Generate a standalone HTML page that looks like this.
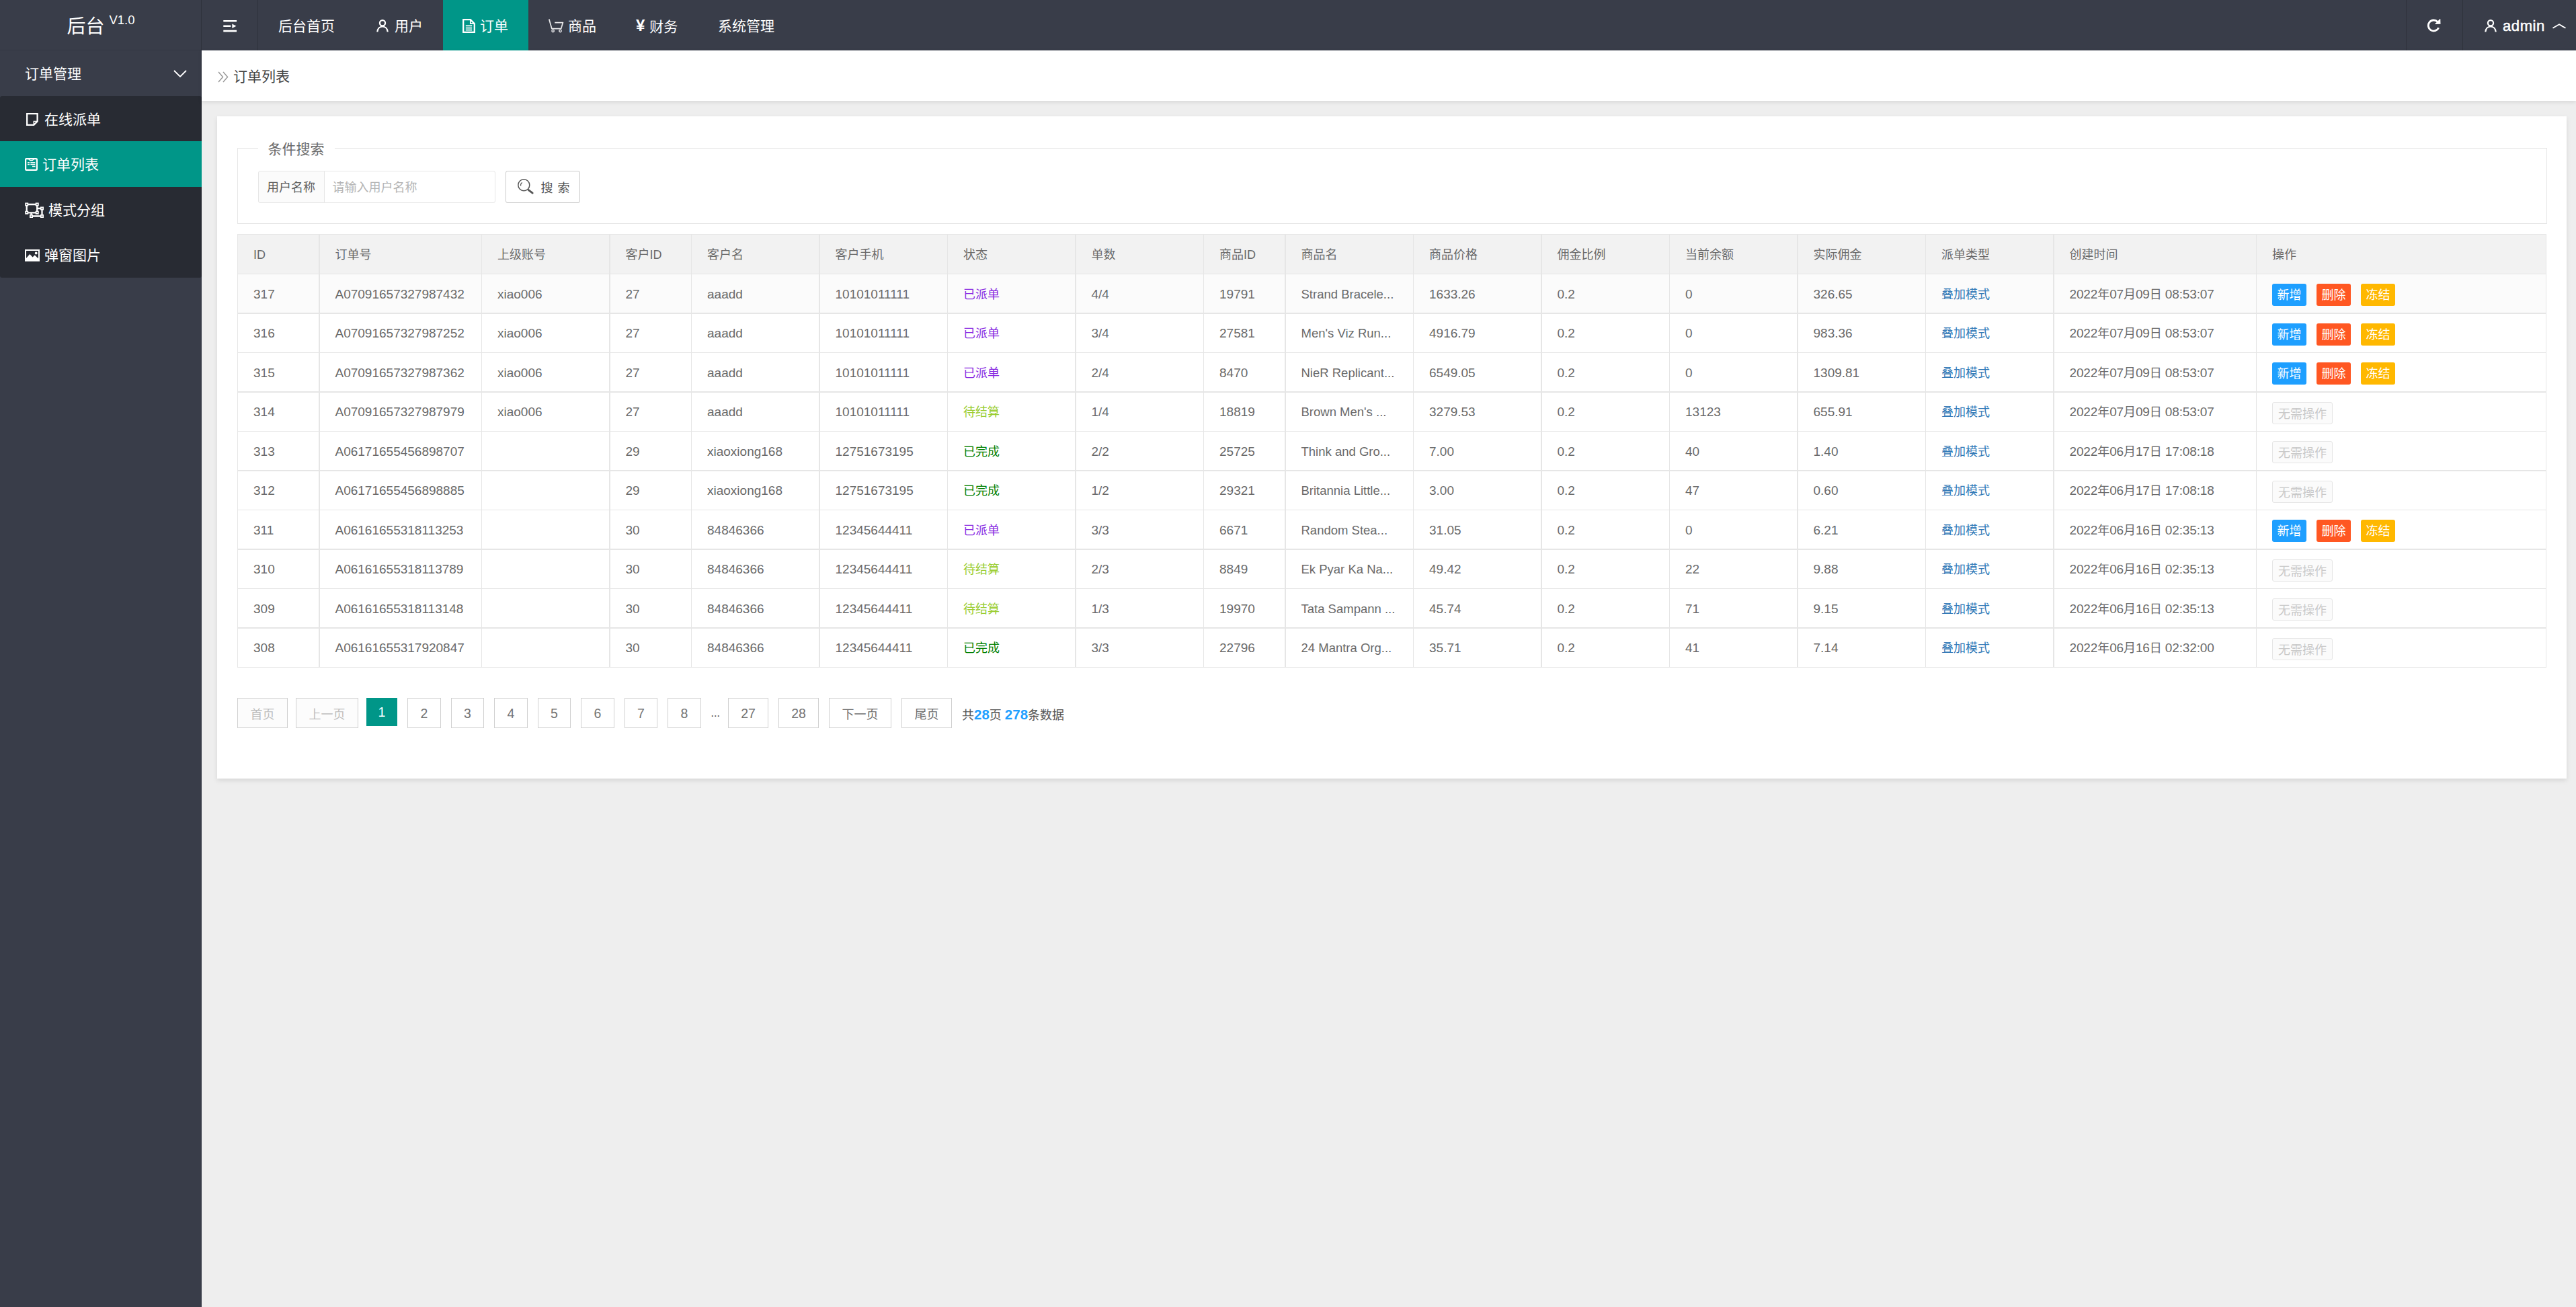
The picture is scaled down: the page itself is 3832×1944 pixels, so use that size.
<!DOCTYPE html>
<html lang="zh-CN">
<head>
<meta charset="utf-8">
<title>后台 V1.0 - 订单列表</title>
<style>
*{box-sizing:border-box;margin:0;padding:0}
html,body{width:3832px;height:1944px;overflow:hidden}
body{background:#eeeeee;font-family:"Liberation Sans","Noto Sans CJK SC",sans-serif;color:#666;font-size:21px;position:relative}
a{text-decoration:none;color:inherit}
svg{display:block}
.abs{position:absolute}
/* header */
#hd{position:absolute;left:0;top:0;width:3832px;height:75px;background:#393D49;color:#fff}
#logo{position:absolute;left:0;top:0;width:300px;height:75px;text-align:center;line-height:79px;font-size:28px;white-space:nowrap;border-bottom:1px solid #343843}
#logo sup{font-size:18.500px;position:relative;top:-2.500px;margin-left:7px;vertical-align:super;line-height:0}
.vline{position:absolute;top:0;width:1px;height:75px;background:#2f323c}
.nav{position:absolute;top:0;height:75px;line-height:78px;font-size:21px;color:#fff;white-space:nowrap}
.nav.on{background:#009688}
.nav svg{position:absolute}
/* sidebar */
#sd{position:absolute;left:0;top:75px;width:300px;height:1869px;background:#393D49;color:#fff}
#sd .grp{position:absolute;left:0;top:0;width:300px;height:68px;line-height:69px;padding-left:37px;font-size:21px}
#sd .sub{position:absolute;left:0;top:68px;width:300px;height:270px;background:#282B33;border-radius:3px}
#sd .it{position:absolute;left:0;width:300px;height:68px;line-height:69px;font-size:21px;white-space:nowrap}
#sd .it.on{background:#009688}
#sd .it span{position:absolute;top:0}
#sd .it svg{position:absolute}
/* breadcrumb */
#bc{position:absolute;left:300px;top:75px;width:3532px;height:75px;background:#fff;box-shadow:0 2px 6px rgba(0,0,0,.10);line-height:78px;font-size:21px;color:#444}
#bc span{position:absolute;left:47px;top:0}
/* card */
#card{position:absolute;left:323px;top:173px;width:3495px;height:985px;background:#fff;box-shadow:0 3px 7px rgba(0,0,0,.10)}
#fs{position:absolute;left:30px;top:47px;width:3436px;height:113px;border:1px solid #e6e6e6}
#fs .lg{position:absolute;left:30px;top:-17px;height:34px;line-height:35.500px;padding:0 15px 0 14.5px;background:#fff;font-size:21px;color:#6a6a6a;white-space:nowrap}
.lab{position:absolute;left:30px;top:33px;width:99px;height:48px;border:1px solid #e6e6e6;border-radius:3px 0 0 3px;background:#FBFBFB;font-size:18px;line-height:48px;text-align:center;color:#606060;white-space:nowrap;text-indent:-1px}
.inp{position:absolute;left:128px;top:33px;width:255px;height:48px;border:1px solid #e6e6e6;border-radius:0 3px 3px 0;background:#fff;font-size:18px;line-height:49.5px;padding-left:11.5px;color:#b4b4b4;white-space:nowrap}
.sbtn{position:absolute;left:398px;top:33px;width:111px;height:48px;border:1px solid #C9C9C9;border-radius:3px;background:#fff;font-size:18px;line-height:50px;color:#555;white-space:nowrap}
.sbtn span{position:absolute;left:51.5px;top:0;word-spacing:2px}
.sbtn svg{position:absolute;left:15px;top:9px}
/* table */
#tb{position:absolute;left:30px;top:175px;width:3435px;border-collapse:separate;border-spacing:0;table-layout:fixed;font-size:18px;color:#6a6a6a;border-right:1px solid #e6e6e6;border-bottom:1px solid #e6e6e6}
#tb th,#tb td{border-left:1px solid #e6e6e6;border-top:1px solid #e6e6e6;padding:2px 0 0 23px;text-align:left;font-weight:normal;white-space:nowrap;overflow:hidden;vertical-align:middle;line-height:28px}
#tb .w2{border-left-width:2px;padding-left:22.5px}
#tb tr.h2 td{border-top-width:2px;padding-top:0}
#tb tr{height:58px}
#tb tr.h59{height:59px}
#tb th{background:#f2f2f2;font-size:18px;padding-top:2px}
#tb tr.hv td{background:#fbfbfb}
#tb td.l{font-size:19px}
#tb td.n{font-size:18.500px}
#tb td.dt{letter-spacing:-.13px}
#tb td .c{font-size:18px}
#tb td.sp{color:#8A2BE2}
#tb td.sw{color:#9acd32}
#tb td.sd{color:#008000}
#tb td.lk{color:#337ab7}
.b{display:inline-block;height:33px;line-height:35px;padding:0 7.5px;font-size:18px;border-radius:3px;color:#fff;margin-right:15px;vertical-align:middle;position:relative;top:1px}
.b1{background:#1E9FFF}.b2{background:#FF5722}.b3{background:#FFB800}
.b0{border:1px solid #e6e6e6;background:#FBFBFB;color:#C9C9C9;line-height:34px;padding:0 8px;top:2px}
.u1{top:2px}.b0.d1{top:1px}
/* pager */
#pg{position:absolute;left:0;top:865px;height:45px;font-size:18px;color:#666}
#pg a,#pg span{position:absolute;top:0;height:45px;line-height:44px;text-align:center;white-space:nowrap}
#pg a{border:1px solid #d0d0d0;background:#fff;color:#737373;font-size:19.5px}
#pg a.c{font-size:18px;line-height:48px;color:#6c6c6c}
#pg a.dis{color:#bdbdbd;background:#fcfcfc}
#pg a.cur{background:#009688;color:#fff;border:none;height:42px;line-height:42px}
#pg span.t{top:3px;color:#555}
#pg b{color:#1E9FFF;font-size:20.5px}
</style>
</head>
<body>
<div id="hd">
  <div id="logo">后台<sup>V1.0</sup></div>
  <div class="vline" style="left:299px"></div>
  <div class="nav" style="left:300px;width:83px">
    <svg style="left:32px;top:30px" width="21" height="18" viewBox="0 0 21 18"><path d="M0.300 0h19.700v2.600H0.300zM0.300 7.500h11v2.600H0.300zM0.300 14.800h19.700v2.600H0.300zM13.300 5.500l6.200 3.300-6.200 3.300z" fill="#fff"/></svg>
  </div>
  <div class="vline" style="left:383px"></div>
  <a class="nav" style="left:384px;width:143px;padding-left:30px">后台首页</a>
  <a class="nav" style="left:527px;width:132px;padding-left:60px">
    <svg style="left:33px;top:29px" width="18" height="19" viewBox="0 0 18 19"><circle cx="9" cy="5.300" r="4.100" fill="none" stroke="#fff" stroke-width="2.200"/><path d="M1.300 18.500c0.300-4.800 3.200-8 7.700-8s7.400 3.200 7.700 8" fill="none" stroke="#fff" stroke-width="2.200"/></svg>用户</a>
  <a class="nav on" style="left:659px;width:127px;padding-left:55px">
    <svg style="left:29px;top:28px" width="19" height="21" viewBox="0 0 19 21"><path d="M1.200 1.200H11.800L17.800 7.200V19.800H1.200z" fill="none" stroke="#fff" stroke-width="2.300" stroke-linejoin="miter"/><path d="M11.800 1.200V7.200H17.800" fill="none" stroke="#fff" stroke-width="1.700"/><path d="M4.800 10.300h9.400M4.800 13.600h9.400M4.800 16.700h9.400" stroke="#fff" stroke-width="1.700" fill="none"/></svg>订单</a>
  <a class="nav" style="left:786px;width:131px;padding-left:59px">
    <svg style="left:29.500px;top:28px" width="23" height="21" viewBox="0 0 23 21"><path d="M0.800 0.600L4.800 14.600H18.700L21.400 5.600H9.200" fill="none" stroke="#fff" stroke-opacity=".88" stroke-width="1.700" stroke-linejoin="round"/><circle cx="6.600" cy="18.100" r="1.700" fill="none" stroke="#fff" stroke-opacity=".9" stroke-width="1.400"/><circle cx="17.500" cy="18.100" r="1.700" fill="none" stroke="#fff" stroke-opacity=".9" stroke-width="1.400"/></svg>商品</a>
  <a class="nav" style="left:917px;width:121px;padding-left:30px"><b style="font-size:24px;position:relative;left:-1px;top:-1px">¥</b> 财务</a>
  <a class="nav" style="left:1038px;width:145px;padding-left:30px">系统管理</a>
  <div class="vline" style="left:3579px"></div>
  <div class="nav" style="left:3580px;width:83px">
    <svg style="left:30px;top:28px" width="22" height="20" viewBox="0 0 22 20"><path d="M17.600 13.300a8 8 0 1 1-1.500-8.800" fill="none" stroke="#fff" stroke-width="2.800"/><path d="M11.800 8l8.700-0.300-0.300-8.200z" fill="#fff"/></svg>
  </div>
  <div class="vline" style="left:3663px"></div>
  <a class="nav" style="left:3664px;width:168px;padding-left:59px">
    <svg style="left:32px;top:29px" width="18" height="19" viewBox="0 0 18 19"><circle cx="9" cy="5.300" r="4.100" fill="none" stroke="#fff" stroke-width="2.200"/><path d="M1.300 18.500c0.300-4.800 3.200-8 7.700-8s7.400 3.200 7.700 8" fill="none" stroke="#fff" stroke-width="2.200"/></svg><span style="font-size:22px;letter-spacing:.6px;-webkit-text-stroke:.5px #fff">admin</span>
    <svg style="left:133px;top:35px" width="20" height="8" viewBox="0 0 20 8"><path d="M0.500 6.800l9.500-5.500 9.500 5.500" fill="none" stroke="#fff" stroke-width="1.900"/></svg>
  </a>
</div>

<div id="sd">
  <div class="grp">订单管理
    <svg class="abs" style="left:258px;top:29px" width="20" height="12" viewBox="0 0 20 12"><path d="M1 1l9 9 9-9" fill="none" stroke="#fff" stroke-width="1.800"/></svg>
  </div>
  <div class="sub">
    <a class="it" style="top:0">
      <svg style="left:39px;top:25px" width="18" height="19" viewBox="0 0 18 19"><path d="M1.200 1.200h15.400v11.300l-5.300 5.300H1.200z" fill="none" stroke="#fff" stroke-width="2.300"/><path d="M16.600 12.500h-5.300v5.300" fill="none" stroke="#fff" stroke-width="1.500"/></svg>
      <span style="left:66px">在线派单</span></a>
    <a class="it on" style="top:67px">
      <svg style="left:37px;top:25px" width="19" height="19" viewBox="0 0 19 19"><rect x="1.100" y="1.100" width="16.800" height="16.800" rx="1.200" fill="none" stroke="#fff" stroke-width="2.200"/><path d="M5.500 1.500l2.300 2.200h3.400l2.300-2.200" fill="none" stroke="#fff" stroke-width="1.300"/><path d="M4 6.800h3M8.300 6.800h7M4 9.600h3M8.300 9.600h7M11 12.400h4.500" fill="none" stroke="#fff" stroke-width="1.500"/></svg>
      <span style="left:63px">订单列表</span></a>
    <a class="it" style="top:135px">
      <svg style="left:37px;top:23px" width="28" height="23" viewBox="0 0 28 23"><path d="M9.500 9h16v11.500H9.500z" fill="none" stroke="#fff" stroke-width="2.300"/><path d="M2.700 3h15.500v12.300H2.700z" fill="#282B33" stroke="#fff" stroke-width="2.300"/><path d="M0.200 0.500h5v5h-5zM15.700 0.500h5v5h-5zM0.200 12.800h5v5h-5zM15.700 12.800h5v5h-5zM7 18h5v5H7zM23 18h5v5h-5zM23 6.500h5v5h-5z" fill="#fff"/><path d="M1.900 2.200h1.600v1.600H1.900zM17.400 2.200H19v1.600h-1.600zM1.900 14.500h1.600v1.600H1.900zM17.400 14.500H19v1.600h-1.600zM8.700 19.700h1.600v1.600H8.700zM24.700 19.700h1.600v1.600h-1.600zM24.700 8.200h1.600v1.600h-1.600z" fill="#282B33"/></svg>
      <span style="left:72px">模式分组</span></a>
    <a class="it" style="top:202px">
      <svg style="left:37px;top:26px" width="22" height="18" viewBox="0 0 22 18"><path d="M0 0h22v17.800H0zM2 2v13.800h18V2z" fill="#fff" fill-rule="evenodd"/><path d="M2 13l5.300-6 4.200 4.600 3.200-3 5.300 5v2.500H2z" fill="#fff"/><circle cx="16.700" cy="5.500" r="1.900" fill="#fff"/></svg>
      <span style="left:66px">弹窗图片</span></a>
  </div>
</div>

<div id="bc">
  <svg class="abs" style="left:24px;top:31px" width="16" height="17" viewBox="0 0 16 17"><path d="M1 1l6.500 7.500-6.500 7.500M8 1l6.500 7.500-6.500 7.500" fill="none" stroke="#999" stroke-width="1.500"/></svg>
  <span>订单列表</span>
</div>

<div id="card">
  <div id="fs">
    <div class="lg">条件搜索</div>
    <div class="lab">用户名称</div>
    <div class="inp">请输入用户名称</div>
    <a class="sbtn"><svg width="28" height="28" viewBox="0 0 28 28"><circle cx="11.300" cy="11.300" r="8.500" fill="none" stroke="#555" stroke-width="1.500"/><path d="M6.600 12.500a4.800 4.800 0 0 1 2.200-5" fill="none" stroke="#555" stroke-width="1.200"/><path d="M18.200 18.600l6 4.600" stroke="#555" stroke-width="2.800" stroke-linecap="round"/></svg><span>搜 索</span></a>
  </div>
  <table id="tb">
    <colgroup><col style="width:121px"><col style="width:242px"><col style="width:190px"><col style="width:122px"><col style="width:190px"><col style="width:191px"><col style="width:190px"><col style="width:191px"><col style="width:121px"><col style="width:191px"><col style="width:190px"><col style="width:191px"><col style="width:190px"><col style="width:191px"><col style="width:190px"><col style="width:302px"><col style="width:431px"></colgroup>
    <thead><tr class="h59"><th>ID</th><th class="w2">订单号</th><th>上级账号</th><th class="w2">客户ID</th><th>客户名</th><th class="w2">客户手机</th><th>状态</th><th class="w2">单数</th><th>商品ID</th><th class="w2">商品名</th><th>商品价格</th><th class="w2">佣金比例</th><th>当前余额</th><th class="w2">实际佣金</th><th>派单类型</th><th class="w2">创建时间</th><th>操作</th></tr></thead>
    <tbody>
<tr class="hv"><td class="l">317</td><td class="l w2">A07091657327987432</td><td class="l">xiao006</td><td class="l w2">27</td><td class="l">aaadd</td><td class="l w2">10101011111</td><td class="sp">已派单</td><td class="l w2">4/4</td><td class="l">19791</td><td class="l n w2">Strand Bracele...</td><td class="l">1633.26</td><td class="l w2">0.2</td><td class="l">0</td><td class="l w2">326.65</td><td class="lk">叠加模式</td><td class="l dt w2">2022<span class="c">年</span>07<span class="c">月</span>09<span class="c">日</span> 08:53:07</td><td class="op"><a class="b b1">新增</a><a class="b b2">删除</a><a class="b b3">冻结</a></td></tr>
<tr class="h2 h59"><td class="l">316</td><td class="l w2">A07091657327987252</td><td class="l">xiao006</td><td class="l w2">27</td><td class="l">aaadd</td><td class="l w2">10101011111</td><td class="sp">已派单</td><td class="l w2">3/4</td><td class="l">27581</td><td class="l n w2">Men's Viz Run...</td><td class="l">4916.79</td><td class="l w2">0.2</td><td class="l">0</td><td class="l w2">983.36</td><td class="lk">叠加模式</td><td class="l dt w2">2022<span class="c">年</span>07<span class="c">月</span>09<span class="c">日</span> 08:53:07</td><td class="op"><a class="b b1 u1">新增</a><a class="b b2 u1">删除</a><a class="b b3 u1">冻结</a></td></tr>
<tr><td class="l">315</td><td class="l w2">A07091657327987362</td><td class="l">xiao006</td><td class="l w2">27</td><td class="l">aaadd</td><td class="l w2">10101011111</td><td class="sp">已派单</td><td class="l w2">2/4</td><td class="l">8470</td><td class="l n w2">NieR Replicant...</td><td class="l">6549.05</td><td class="l w2">0.2</td><td class="l">0</td><td class="l w2">1309.81</td><td class="lk">叠加模式</td><td class="l dt w2">2022<span class="c">年</span>07<span class="c">月</span>09<span class="c">日</span> 08:53:07</td><td class="op"><a class="b b1">新增</a><a class="b b2">删除</a><a class="b b3">冻结</a></td></tr>
<tr class="h2 h59"><td class="l">314</td><td class="l w2">A07091657327987979</td><td class="l">xiao006</td><td class="l w2">27</td><td class="l">aaadd</td><td class="l w2">10101011111</td><td class="sw">待结算</td><td class="l w2">1/4</td><td class="l">18819</td><td class="l n w2">Brown Men's ...</td><td class="l">3279.53</td><td class="l w2">0.2</td><td class="l">13123</td><td class="l w2">655.91</td><td class="lk">叠加模式</td><td class="l dt w2">2022<span class="c">年</span>07<span class="c">月</span>09<span class="c">日</span> 08:53:07</td><td class="op"><a class="b b0">无需操作</a></td></tr>
<tr><td class="l">313</td><td class="l w2">A06171655456898707</td><td class="l"></td><td class="l w2">29</td><td class="l">xiaoxiong168</td><td class="l w2">12751673195</td><td class="sd">已完成</td><td class="l w2">2/2</td><td class="l">25725</td><td class="l n w2">Think and Gro...</td><td class="l">7.00</td><td class="l w2">0.2</td><td class="l">40</td><td class="l w2">1.40</td><td class="lk">叠加模式</td><td class="l dt w2">2022<span class="c">年</span>06<span class="c">月</span>17<span class="c">日</span> 17:08:18</td><td class="op"><a class="b b0 d1">无需操作</a></td></tr>
<tr class="h2 h59"><td class="l">312</td><td class="l w2">A06171655456898885</td><td class="l"></td><td class="l w2">29</td><td class="l">xiaoxiong168</td><td class="l w2">12751673195</td><td class="sd">已完成</td><td class="l w2">1/2</td><td class="l">29321</td><td class="l n w2">Britannia Little...</td><td class="l">3.00</td><td class="l w2">0.2</td><td class="l">47</td><td class="l w2">0.60</td><td class="lk">叠加模式</td><td class="l dt w2">2022<span class="c">年</span>06<span class="c">月</span>17<span class="c">日</span> 17:08:18</td><td class="op"><a class="b b0">无需操作</a></td></tr>
<tr><td class="l">311</td><td class="l w2">A06161655318113253</td><td class="l"></td><td class="l w2">30</td><td class="l">84846366</td><td class="l w2">12345644411</td><td class="sp">已派单</td><td class="l w2">3/3</td><td class="l">6671</td><td class="l n w2">Random Stea...</td><td class="l">31.05</td><td class="l w2">0.2</td><td class="l">0</td><td class="l w2">6.21</td><td class="lk">叠加模式</td><td class="l dt w2">2022<span class="c">年</span>06<span class="c">月</span>16<span class="c">日</span> 02:35:13</td><td class="op"><a class="b b1">新增</a><a class="b b2">删除</a><a class="b b3">冻结</a></td></tr>
<tr class="h2 h59"><td class="l">310</td><td class="l w2">A06161655318113789</td><td class="l"></td><td class="l w2">30</td><td class="l">84846366</td><td class="l w2">12345644411</td><td class="sw">待结算</td><td class="l w2">2/3</td><td class="l">8849</td><td class="l n w2">Ek Pyar Ka Na...</td><td class="l">49.42</td><td class="l w2">0.2</td><td class="l">22</td><td class="l w2">9.88</td><td class="lk">叠加模式</td><td class="l dt w2">2022<span class="c">年</span>06<span class="c">月</span>16<span class="c">日</span> 02:35:13</td><td class="op"><a class="b b0">无需操作</a></td></tr>
<tr><td class="l">309</td><td class="l w2">A06161655318113148</td><td class="l"></td><td class="l w2">30</td><td class="l">84846366</td><td class="l w2">12345644411</td><td class="sw">待结算</td><td class="l w2">1/3</td><td class="l">19970</td><td class="l n w2">Tata Sampann ...</td><td class="l">45.74</td><td class="l w2">0.2</td><td class="l">71</td><td class="l w2">9.15</td><td class="lk">叠加模式</td><td class="l dt w2">2022<span class="c">年</span>06<span class="c">月</span>16<span class="c">日</span> 02:35:13</td><td class="op"><a class="b b0 d1">无需操作</a></td></tr>
<tr class="h2 h59"><td class="l">308</td><td class="l w2">A06161655317920847</td><td class="l"></td><td class="l w2">30</td><td class="l">84846366</td><td class="l w2">12345644411</td><td class="sd">已完成</td><td class="l w2">3/3</td><td class="l">22796</td><td class="l n w2">24 Mantra Org...</td><td class="l">35.71</td><td class="l w2">0.2</td><td class="l">41</td><td class="l w2">7.14</td><td class="lk">叠加模式</td><td class="l dt w2">2022<span class="c">年</span>06<span class="c">月</span>16<span class="c">日</span> 02:32:00</td><td class="op"><a class="b b0">无需操作</a></td></tr>
    </tbody>
  </table>
  <div id="pg">
    <a class="dis c" style="left:30px;width:75px">首页</a>
    <a class="dis c" style="left:117px;width:93px">上一页</a>
    <a class="cur" style="left:222px;width:46px">1</a>
    <a style="left:283px;width:50px">2</a>
    <a style="left:348px;width:49px">3</a>
    <a style="left:412px;width:50px">4</a>
    <a style="left:477px;width:49px">5</a>
    <a style="left:541px;width:50px">6</a>
    <a style="left:606px;width:49px">7</a>
    <a style="left:670px;width:50px">8</a>
    <span style="left:734px;width:14px;letter-spacing:-.5px">...</span>
    <a style="left:760px;width:60px">27</a>
    <a style="left:835px;width:60px">28</a>
    <a class="c" style="left:910px;width:93px">下一页</a>
    <a class="c" style="left:1018px;width:75px">尾页</a>
    <span class="t" style="left:1108px">共<b>28</b>页 <b>278</b>条数据</span>
  </div>
</div>
</body>
</html>
